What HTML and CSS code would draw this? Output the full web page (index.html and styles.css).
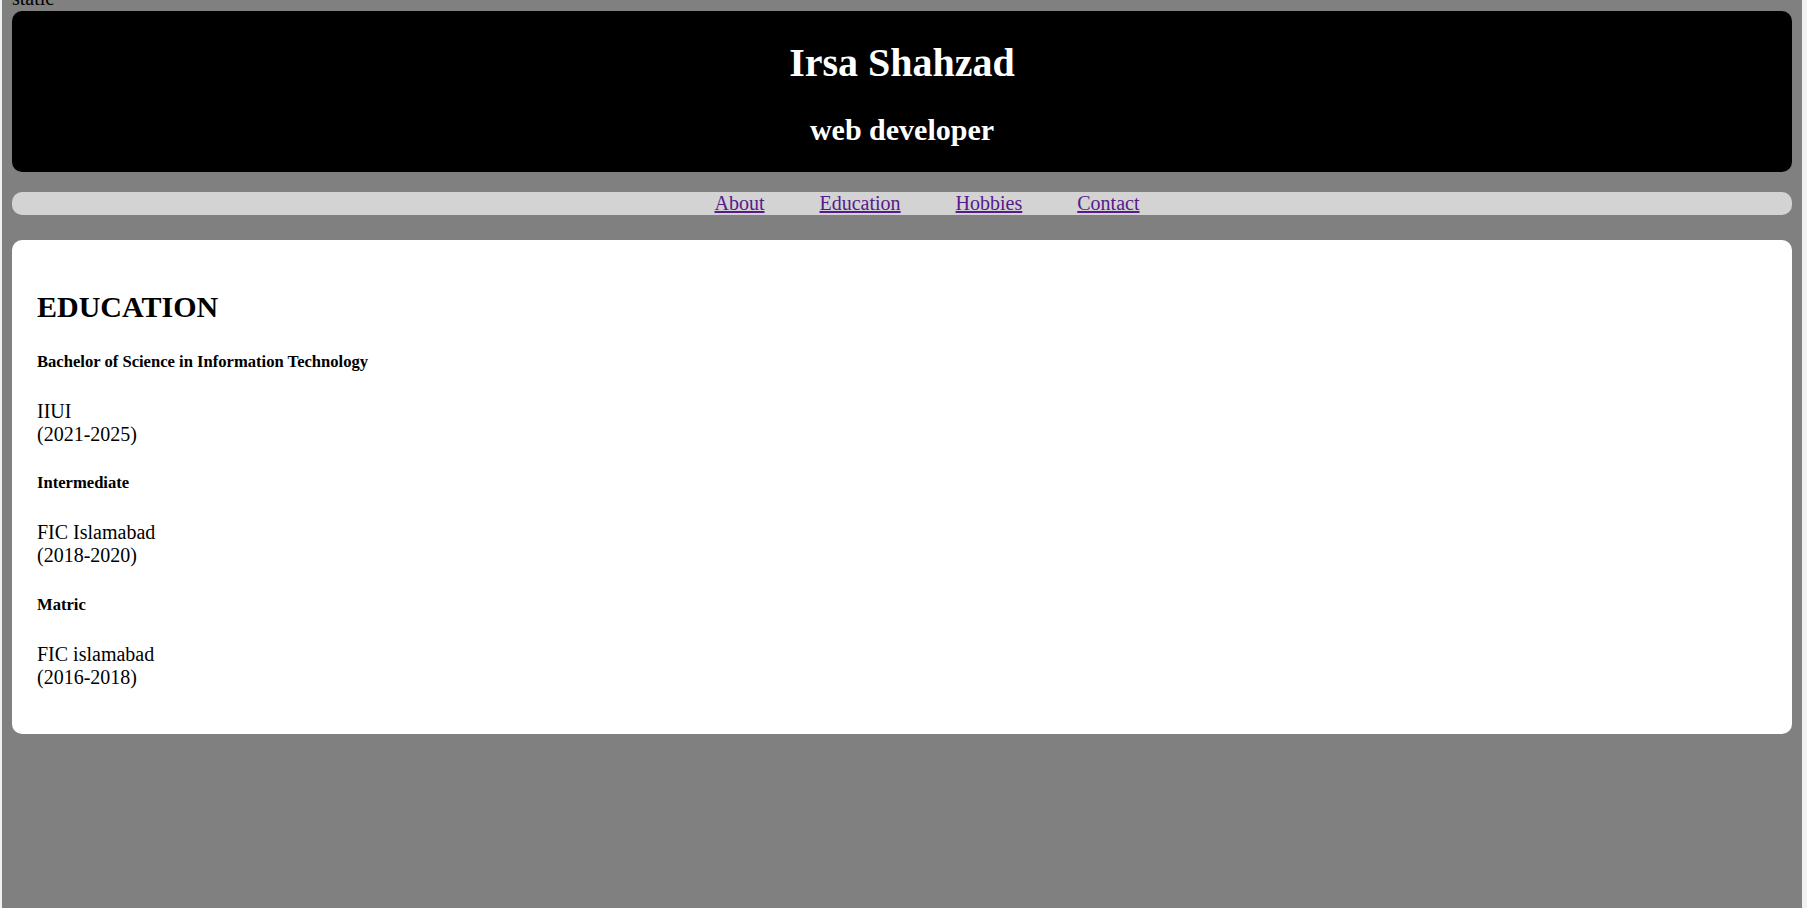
FILE: index.html
```html
<!DOCTYPE html>
<html lang="en">
<head>
<meta charset="utf-8">
<title>Irsa Shahzad</title>
<link rel="stylesheet" href="styles.css">
</head>
<body>
<div class="static">static</div>
<header class="top">
  <h1>Irsa Shahzad</h1>
  <h2>web developer</h2>
</header>
<nav class="menu">
  <a href="#about">About</a>
  <a href="#education">Education</a>
  <a href="#hobbies">Hobbies</a>
  <a href="#contact">Contact</a>
</nav>
<main class="card" id="education">
  <h2>EDUCATION</h2>
  <h5>Bachelor of Science in Information Technology</h5>
  <p>IIUI<br>(2021-2025)</p>
  <h5>Intermediate</h5>
  <p>FIC Islamabad<br>(2018-2020)</p>
  <h5>Matric</h5>
  <p>FIC islamabad<br>(2016-2018)</p>
</main>
</body>
</html>
```
FILE: styles.css
```css
html {
  font-size: 20px;
  background: #f1f1f1;
  height: 100%;
}
body {
  margin: 0 5px 0 2px;
  padding: 0 10px 10px;
  min-height: 100%;
  box-sizing: border-box;
  background: #808080;
  font-family: "Liberation Serif", "Times New Roman", serif;
  font-size: 20px;
  color: #000;
  overflow: hidden;
}
.static {
  margin-top: -13px;
  line-height: 23px;
}
.top {
  margin-top: 1px;
  background: #000;
  color: #fff;
  border-radius: 10px;
  padding: 1px 0;
  text-align: center;
}
.top h1 {
  font-size: 40px;
  margin: 26.8px 0;
}
.top h2 {
  font-size: 30px;
  margin: 24.9px 0;
}
.menu {
  margin-top: 20px;
  background: #d3d3d3;
  border-radius: 10px;
  text-align: center;
  line-height: 23px;
}
.menu a {
  color: #551a8b;
  margin-left: 50px;
}
.card {
  display: block;
  margin-top: 25px;
  background: #fff;
  border-radius: 10px;
  padding: 25px;
}
.card h2 {
  font-size: 30px;
  margin: 24.9px 0;
}
.card h5 {
  font-size: 16.6px;
  margin: 27.7px 0;
}
.card p {
  margin: 20px 0;
}
```
